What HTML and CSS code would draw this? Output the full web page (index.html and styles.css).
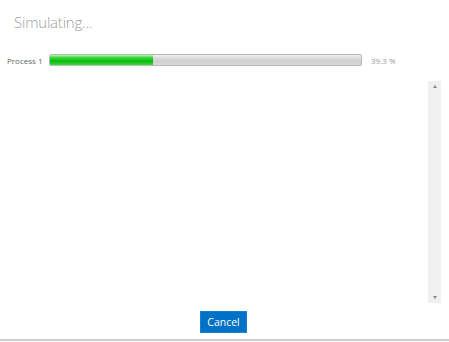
FILE: index.html
```html
<!DOCTYPE html>
<html>
<head>
<meta charset="utf-8">
<link rel="stylesheet" href="styles.css">
</head>
<body>
<div class="dialog">
  <h1 class="title">Simulating...</h1>
  <div class="process-row">
    <span class="proc-label">Process 1</span>
    <div class="bar"><div class="fill" style="width:33%"></div></div>
    <span class="pct">39.3 %</span>
  </div>
  <div class="log-area">
    <div class="log"></div>
    <div class="scrollbar">
      <span class="arrow up"></span>
      <span class="arrow down"></span>
    </div>
  </div>
  <div class="footer">
    <button class="cancel">Cancel</button>
  </div>
</div>
<div class="bottom-line"></div>
</body>
</html>
```
FILE: styles.css
```css
html, body { margin: 0; padding: 0; }
body {
  width: 449px; height: 342px; background: #fff; overflow: hidden;
  font-family: "Open Sans", "Liberation Sans", sans-serif;
  position: relative;
}
.dialog { display: flex; flex-direction: column; height: 340px; }
.title {
  margin: 0; padding: 12px 0 0 14px;
  font-size: 15px; font-weight: 300; color: #a0a0a0; line-height: 20px;
  letter-spacing: -0.2px;
}
.process-row {
  display: flex; align-items: center; margin-top: 22px; height: 12px;
}
.proc-label {
  width: 42px; padding-left: 7px; font-size: 8px; color: #666; white-space: nowrap;
}
.bar {
  width: 311px; height: 10px; border: 1px solid #b8b8b8; border-radius: 2px;
  background: linear-gradient(#f2f2f2 0%, #dcdcdc 30%, #cfcfcf 60%, #dadada 100%);
  overflow: hidden; box-sizing: content-box;
}
.fill {
  height: 100%;
  background: linear-gradient(#b8f5b8 0%, #3ddc3d 25%, #0bb80b 60%, #3ed43e 100%);
}
.pct { margin-left: 9px; font-size: 8px; color: #999; }
.log-area { display: flex; flex: 1; margin-top: 15px; }
.log { flex: 1; }
.scrollbar {
  width: 13px; height: 222px; margin-right: 8px; background: #f0f0f0;
  display: flex; flex-direction: column; justify-content: space-between; align-items: center;
  padding: 4px 0; box-sizing: border-box;
}
.arrow { width: 0; height: 0; border-left: 2.5px solid transparent; border-right: 2.5px solid transparent; }
.arrow.up { border-bottom: 3px solid #888; }
.arrow.down { border-top: 3px solid #888; }
.footer { display: flex; justify-content: center; padding-bottom: 7px; }
.cancel {
  background: #0072c6; color: #fff; border: 1px solid #1a7fd0; padding: 0;
  width: 47px; height: 22px; font-family: "Open Sans", sans-serif; font-size: 10.5px;
  margin-left: -2px;
}
.bottom-line {
  position: absolute; left: 0; right: 0; top: 339px; height: 2px; background: #cccccc;
}
```
